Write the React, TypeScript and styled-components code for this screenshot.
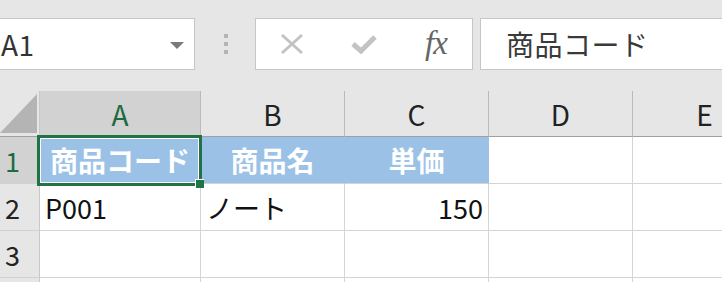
import React from "react";
import styled, { createGlobalStyle } from "styled-components";

const GlobalStyle = createGlobalStyle`
  html, body {
    margin: 0;
    padding: 0;
    background: #e6e6e6;
    overflow: hidden;
  }
  body {
    font-family: "Noto Sans CJK JP", "Noto Sans", sans-serif;
  }
`;

const columns = ["A", "B", "C", "D", "E"];

type CellData = { text?: string; align?: "left" | "center" | "right"; head?: boolean };

const rows: CellData[][] = [
  [
    { text: "商品コード", align: "center", head: true },
    { text: "商品名", align: "center", head: true },
    { text: "単価", align: "center", head: true },
    {},
    {},
  ],
  [{ text: "P001" }, { text: "ノート" }, { text: "150", align: "right" }, {}, {}],
  [{}, {}, {}, {}, {}],
  [{}, {}, {}, {}, {}],
];

const App = () => {
  return (
    <>
      <GlobalStyle />
      <Page>
        <FormulaBar>
          <NameBox>
            <NameText>A1</NameText>
            <DropArrow />
          </NameBox>
          <Grip>
            <GripDot />
            <GripDot />
            <GripDot />
          </Grip>
          <FxBox>
            <FxButton>
              <svg width="24" height="22" viewBox="0 0 24 22">
                <path d="M2 2 L22 20 M22 2 L2 20" stroke="#c3c3c3" strokeWidth="3" fill="none" />
              </svg>
            </FxButton>
            <FxButton>
              <svg width="26" height="20" viewBox="0 0 26 20">
                <path d="M2 10 L10 17 L24 3" stroke="#c3c3c3" strokeWidth="5" fill="none" />
              </svg>
            </FxButton>
            <FxButton>
              <FxLabel>fx</FxLabel>
            </FxButton>
          </FxBox>
          <FormulaInput>商品コード</FormulaInput>
        </FormulaBar>

        <Sheet>
          <Corner>
            <svg width="37" height="39" viewBox="0 0 37 39">
              <polygon points="0,39 37,39 37,0" fill="#b4b4b4" />
            </svg>
          </Corner>
          {columns.map((c) => (
            <ColHeader key={c} $active={c === "A"}>
              {c}
            </ColHeader>
          ))}
          {rows.map((row, ri) => (
            <React.Fragment key={ri}>
              <RowHeader $active={ri === 0}>{ri < 3 ? ri + 1 : ""}</RowHeader>
              {row.map((cell, ci) => (
                <Cell key={ci} $align={cell.align || "left"} $head={!!cell.head}>
                  {cell.text}
                  {ri === 0 && ci === 0 && (
                    <Selection>
                      <FillHandle />
                    </Selection>
                  )}
                </Cell>
              ))}
            </React.Fragment>
          ))}
        </Sheet>
      </Page>
    </>
  );
};

export default App;

const Page = styled.div`
  width: 722px;
  height: 282px;
  overflow: hidden;
  background: #e6e6e6;
`;

const FormulaBar = styled.div`
  display: flex;
  align-items: flex-start;
  height: 91px;
  padding-top: 18px;
  box-sizing: border-box;
`;

const NameBox = styled.div`
  display: flex;
  align-items: center;
  flex: none;
  width: 207px;
  height: 52px;
  margin-left: -12px;
  padding-left: 12px;
  box-sizing: border-box;
  background: #fff;
  border: 1px solid #c6c6c6;
`;

const NameText = styled.span`
  font-size: 28px;
  color: #333;
  letter-spacing: 0.5px;
`;

const DropArrow = styled.span`
  margin-left: auto;
  margin-right: 10px;
  margin-top: 2px;
  width: 0;
  height: 0;
  border-left: 7px solid transparent;
  border-right: 7px solid transparent;
  border-top: 7px solid #7a7a7a;
`;

const Grip = styled.div`
  display: flex;
  flex-direction: column;
  gap: 4px;
  margin-left: 29px;
  margin-top: 16px;
`;

const GripDot = styled.span`
  width: 4px;
  height: 4px;
  background: #b4b4b4;
`;

const FxBox = styled.div`
  display: grid;
  grid-template-columns: repeat(3, 72px);
  align-items: center;
  flex: none;
  width: 218px;
  height: 52px;
  margin-left: 27px;
  box-sizing: border-box;
  background: #fff;
  border: 1px solid #c6c6c6;
`;

const FxButton = styled.div`
  display: flex;
  align-items: center;
  justify-content: center;
`;

const FxLabel = styled.span`
  font-family: "Liberation Serif", serif;
  font-style: italic;
  font-size: 33px;
  color: #666;
  letter-spacing: -1px;
  margin-top: -2px;
`;

const FormulaInput = styled.div`
  display: flex;
  align-items: center;
  flex: 1;
  height: 52px;
  margin-left: 7px;
  margin-right: -10px;
  padding-left: 25px;
  box-sizing: border-box;
  background: #fff;
  border: 1px solid #c6c6c6;
  font-size: 28px;
  color: #3a3a3a;
  letter-spacing: 0.5px;
`;

const Sheet = styled.div`
  display: grid;
  grid-template-columns: 40px 161px 144px 144px 144px 144px;
  grid-template-rows: 46px repeat(4, 47px);
  background: #fff;
`;

const Corner = styled.div`
  display: flex;
  align-items: flex-end;
  background: #e6e6e6;
  border-right: 1px solid #c8c8c8;
  border-bottom: 1px solid #a0a0a0;
  padding-bottom: 3px;
  box-sizing: border-box;
`;

const ColHeader = styled.div<{ $active: boolean }>`
  display: flex;
  align-items: center;
  justify-content: center;
  background: ${(p) => (p.$active ? "#d2d2d2" : "#e6e6e6")};
  color: ${(p) => (p.$active ? "#1d6b41" : "#222")};
  border-right: 1px solid #bababa;
  border-bottom: 1px solid #a0a0a0;
  box-sizing: border-box;
  font-size: 28px;
`;

const RowHeader = styled.div<{ $active: boolean }>`
  display: flex;
  align-items: center;
  padding-left: 5px;
  background: ${(p) => (p.$active ? "#d2d2d2" : "#e6e6e6")};
  color: ${(p) => (p.$active ? "#1d6b41" : "#222")};
  border-right: 1px solid #c8c8c8;
  border-bottom: 1px solid #d0d0d0;
  box-sizing: border-box;
  font-size: 27px;
`;

const Cell = styled.div<{ $align: "left" | "center" | "right"; $head: boolean }>`
  position: relative;
  display: flex;
  align-items: center;
  justify-content: ${(p) =>
    p.$align === "center" ? "center" : p.$align === "right" ? "flex-end" : "flex-start"};
  padding: 0 5px;
  box-sizing: border-box;
  background: ${(p) => (p.$head ? "#9bc2e6" : "#fff")};
  color: ${(p) => (p.$head ? "#fff" : "#111")};
  font-weight: ${(p) => (p.$head ? 700 : 400)};
  border-right: 1px solid ${(p) => (p.$head ? "#9bc2e6" : "#d4d4d4")};
  border-bottom: 1px solid #d4d4d4;
  font-size: ${(p) => (p.$head ? "28px" : "27px")};
  white-space: nowrap;
`;

const Selection = styled.div`
  position: absolute;
  z-index: 2;
  left: -3px;
  top: -2px;
  right: -2px;
  bottom: -3px;
  border: 3px solid #217346;
  outline: 1px solid #fff;
  outline-offset: -4px;
  pointer-events: none;
`;

const FillHandle = styled.span`
  position: absolute;
  right: -5px;
  bottom: -5px;
  width: 8px;
  height: 8px;
  background: #217346;
  border-left: 1px solid #fff;
  border-top: 1px solid #fff;
`;
